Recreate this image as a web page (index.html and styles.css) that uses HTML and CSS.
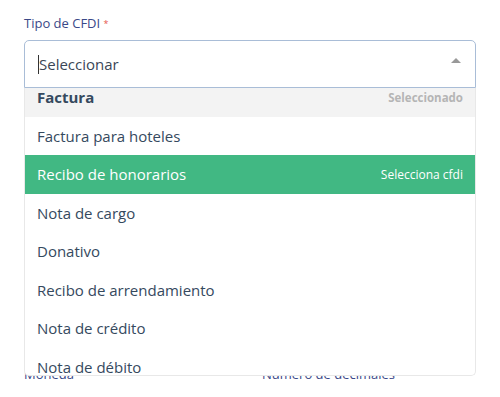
FILE: index.html
```html
<!DOCTYPE html>
<html lang="es">
<head>
<meta charset="utf-8">
<title>Tipo de CFDI</title>
<link rel="stylesheet" href="styles.css">
</head>
<body>
<form class="form">
  <div class="field">
    <label class="label">Tipo de CFDI <span class="req">*</span></label>
    <div class="select">
      <div class="select-tags">
        <span class="caret"></span>
        <span class="placeholder">Seleccionar</span>
        <span class="arrow"></span>
      </div>
      <div class="dropdown">
        <ul class="options">
          <li class="option selected"><span>Factura</span><span class="hint">Seleccionado</span></li>
          <li class="option"><span>Factura para hoteles</span></li>
          <li class="option highlight"><span>Recibo de honorarios</span><span class="hint">Selecciona cfdi</span></li>
          <li class="option"><span>Nota de cargo</span></li>
          <li class="option"><span>Donativo</span></li>
          <li class="option"><span>Recibo de arrendamiento</span></li>
          <li class="option"><span>Nota de crédito</span></li>
          <li class="option"><span>Nota de débito</span></li>
          <li class="option"><span>Carta porte</span></li>
        </ul>
      </div>
    </div>
  </div>
  <div class="row">
    <label class="label">Moneda</label>
    <label class="label">Número de decimales</label>
  </div>
</form>
</body>
</html>
```

FILE: styles.css
```css
html, body {
  margin: 0;
  padding: 0;
  background: #ffffff;
  font-family: "Open Sans", "Liberation Sans", sans-serif;
}

.form {
  width: 452px;
  padding: 14px 24px 0;
}

.label {
  display: block;
  font-size: 13px;
  line-height: 18px;
  color: #3a4888;
}

.req {
  color: #e5534b;
  font-size: 9px;
  vertical-align: 1px;
}

.field .label {
  margin-bottom: 7px;
}

.select {
  position: relative;
}

.select-tags {
  box-sizing: border-box;
  height: 48px;
  border: 1px solid #a9bdd7;
  border-radius: 5px 5px 0 0;
  display: flex;
  align-items: center;
  padding: 0 14px 0 13px;
  color: #35495e;
  font-size: 15px;
}

.caret {
  width: 1px;
  height: 19px;
  background: #333;
}

.placeholder {
  flex: 1;
  color: #3a4656;
}

.arrow {
  width: 0;
  height: 0;
  border-left: 5px solid transparent;
  border-right: 5px solid transparent;
  border-bottom: 5px solid #999;
  margin-top: -7px;
}

.dropdown {
  position: absolute;
  top: 48px;
  left: 0;
  right: 0;
  height: 288px;
  box-sizing: border-box;
  background: #fff;
  border: 1px solid #e8e8e8;
  border-top: none;
  border-radius: 0 0 5px 5px;
  overflow: hidden;
  z-index: 5;
}

.options {
  list-style: none;
  margin: -10px 0 0;
  padding: 0;
}

.option {
  height: 38.5px;
  box-sizing: border-box;
  display: flex;
  align-items: center;
  justify-content: space-between;
  padding: 0 12px;
  font-size: 15px;
  color: #35495e;
}

.option .hint {
  font-size: 12px;
}

.option.selected {
  background: #f3f3f3;
  font-weight: 700;
}

.option.selected .hint {
  color: #b5b5b5;
  font-size: 11.5px;
}

.option.highlight {
  background: #41b883;
  color: #fff;
}

.option.highlight .hint {
  color: #fff;
}

.row {
  display: grid;
  grid-template-columns: 1fr 1fr;
  column-gap: 24px;
  margin-top: 277px;
}
```
